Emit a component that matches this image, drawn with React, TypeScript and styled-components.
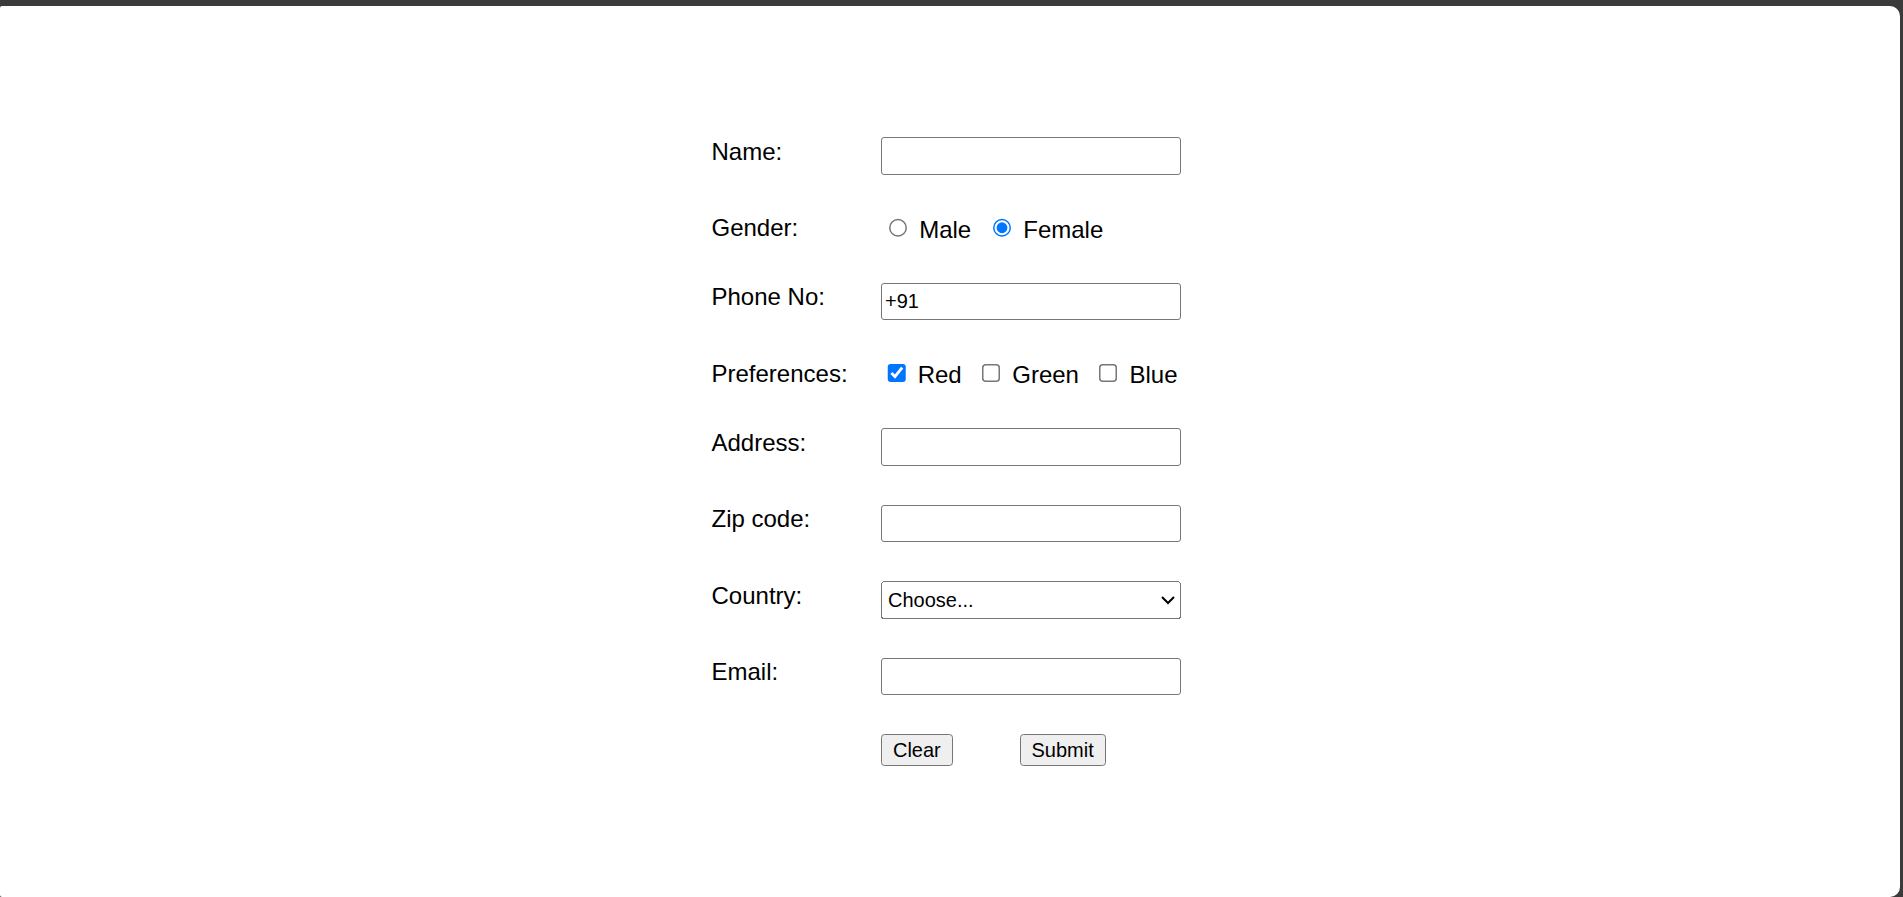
import React from 'react';
import styled, { createGlobalStyle } from 'styled-components';

const GlobalStyle = createGlobalStyle`
  html, body {
    margin: 0;
    padding: 0;
    height: 100%;
    overflow: hidden;
    background: #3b3b3b;
  }
  body {
    font-family: "Liberation Sans", Arial, sans-serif;
  }
`;

const Window = styled.main`
  box-sizing: border-box;
  height: 891px;
  margin: 6px 3px 0 0;
  padding-top: 131px;
  background: #ffffff;
  border-radius: 2px 10px 10px 2px;
  display: flex;
  justify-content: center;
  align-items: flex-start;
`;

const Form = styled.form`
  zoom: 1.5;
  width: 320px;
  display: grid;
  grid-template-columns: 114px 200px;
  row-gap: 26px;
  align-items: start;
  font-family: "Liberation Sans", Arial, sans-serif;
  font-size: 16px;
  line-height: normal;
  color: #000;
`;

const FieldLabel = styled.label`
  align-self: start;
  padding: 0.5px 0 0 1px;
  white-space: nowrap;
`;

const TextInput = styled.input`
  box-sizing: border-box;
  width: 200px;
  height: 25px;
  margin: 0;
  padding: 1px 2px;
  border: 1px solid #767676;
  border-radius: 2px;
  background: #fff;
  color: #000;
  font-family: "Liberation Sans", Arial, sans-serif;
  font-size: 13.333px;
`;

const Select = styled.select`
  box-sizing: border-box;
  width: 200px;
  height: 25px;
  margin: 0;
  color: #000;
  font-family: "Liberation Sans", Arial, sans-serif;
  font-size: 13.333px;
`;

const Choices = styled.div`
  white-space: nowrap;
`;

const Choice = styled.label`
  margin-right: 4.8px;
`;

const Radio = styled.input.attrs({ type: 'radio' })`
  margin: 3px 3px 0 5px;
`;

const Checkbox = styled.input.attrs({ type: 'checkbox' })`
  margin: 3px 3px 3px 4px;
`;

const ButtonRow = styled.div`
  grid-column: 2;
  display: flex;
  align-items: flex-start;
  gap: 44.5px;
`;

const Button = styled.button`
  margin: 0;
  font-family: "Liberation Sans", Arial, sans-serif;
  font-size: 13.333px;
  color: #000;
`;

type FieldProps = { id: string; label: string; defaultValue?: string; type?: string };

const TextField: React.FC<FieldProps> = ({ id, label, defaultValue, type = 'text' }) => (
  <>
    <FieldLabel htmlFor={id}>{label}</FieldLabel>
    <TextInput id={id} name={id} type={type} defaultValue={defaultValue} />
  </>
);

export default function App() {
  return (
    <>
      <GlobalStyle />
      <Window>
        <Form onSubmit={(e) => e.preventDefault()}>
          <TextField id="name" label="Name:" />

          <FieldLabel>Gender:</FieldLabel>
          <Choices>
            <Choice>
              <Radio name="gender" value="male" /> Male
            </Choice>{' '}
            <Choice>
              <Radio name="gender" value="female" defaultChecked /> Female
            </Choice>
          </Choices>

          <TextField id="phone" label="Phone No:" defaultValue="+91" />

          <FieldLabel>Preferences:</FieldLabel>
          <Choices>
            <Choice>
              <Checkbox name="red" defaultChecked /> Red
            </Choice>{' '}
            <Choice>
              <Checkbox name="green" /> Green
            </Choice>{' '}
            <Choice>
              <Checkbox name="blue" /> Blue
            </Choice>
          </Choices>

          <TextField id="address" label="Address:" />
          <TextField id="zip" label="Zip code:" />

          <FieldLabel htmlFor="country">Country:</FieldLabel>
          <Select id="country" name="country" defaultValue="">
            <option value="">Choose...</option>
            <option value="in">India</option>
            <option value="us">United States</option>
            <option value="uk">United Kingdom</option>
          </Select>

          <TextField id="email" label="Email:" type="email" />

          <ButtonRow>
            <Button type="reset">Clear</Button>
            <Button type="submit">Submit</Button>
          </ButtonRow>
        </Form>
      </Window>
    </>
  );
}
